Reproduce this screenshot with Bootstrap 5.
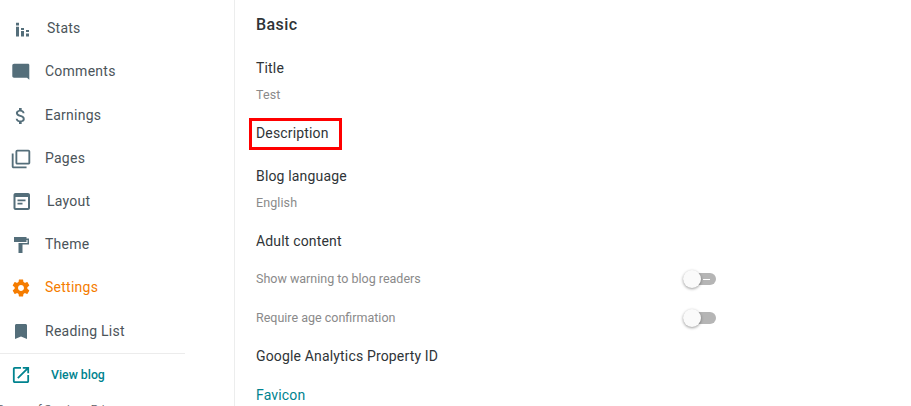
<!DOCTYPE html>
<html lang="en">
<head>
    <meta charset="UTF-8">
    <meta name="viewport" content="width=device-width, initial-scale=1.0">
    <title>Settings</title>
    <link href="https://cdn.jsdelivr.net/npm/bootstrap@5.3.0/dist/css/bootstrap.min.css" rel="stylesheet">
    <style>
        html, body { height: 406px; overflow: hidden; }
        body { font-family: Roboto, sans-serif; background: #fff; }

        /* sidebar */
        .side-panel { width: 235px; height: 406px; border-right: 1px solid #eceded; flex: none; overflow: hidden; }
        .side-menu { width: 185px; padding-top: 7px; }
        .side-item { height: 43px; font-size: 14px; letter-spacing: .25px; color: #4b545a; }
        .side-item.is-active { color: #f57c00; }
        .side-item-gap { margin-bottom: 1px; }
        .side-icon { width: 24px; height: 24px; margin-left: 9px; margin-right: 12px; fill: #546e7a; flex: none; }
        .is-active .side-icon { fill: #f57c00; }
        .side-shift { margin-left: 2px; }
        .side-rule { border-top: 1px solid #ececec; }
        .view-link { height: 42px; font-size: 12.3px; font-weight: 500; color: #00838f; }
        .view-link .side-icon { fill: #00838f; margin-right: 18px; margin-left: 9px; }
        .side-foot { font-size: 11.5px; color: #5f6368; line-height: 16px; margin-top: 5px; margin-left: -4px; }

        /* main column */
        .main-panel { padding-left: 21px; }
        .basic-head { font-size: 16px; font-weight: 500; letter-spacing: .4px; line-height: 20px; margin-top: 15px; margin-bottom: 23px; color: #2f3437; }
        .field-name { font-size: 14px; letter-spacing: .16px; line-height: 20px; color: #2f3437; }
        .field-value { font-size: 12.5px; letter-spacing: .1px; line-height: 16px; color: #8a8a8a; margin-top: 9px; }
        .gap-after-value { margin-top: 20px; }
        .gap-after-name { margin-top: 23px; }
        .gap-after-toggle { margin-top: 18px; }
        .gap-last { margin-top: 19px; }
        .toggle-row { width: 461px; height: 20px; font-size: 12.5px; color: #8a8a8a; }
        .toggle-first { margin-top: 18px; }
        .toggle-next { margin-top: 19px; }
        .favicon-link { color: #00838f; }

        /* switch */
        .switch-track { position: relative; display: block; width: 33px; height: 12px; border-radius: 6px; background: #b5b5b5; margin-right: 1px; }
        .switch-knob { position: absolute; left: 0; top: -3px; width: 18px; height: 18px; border-radius: 50%; background: #fafafa; box-shadow: 0 1px 3px rgba(0,0,0,.4); }
        .switch-dash { position: absolute; left: 20px; top: 5.500px; width: 7px; height: 1px; background: #fff; }

        /* annotation drawn on the screenshot */
        .mark-wrap { position: relative; display: inline-block; }
        .mark-box { position: absolute; left: -7px; right: -13px; top: -5px; bottom: -7px; border: 3px solid #f00; }
    </style>
</head>
<body>
    <div class="d-flex">
        <div class="side-panel">
            <div class="side-menu">
                <div class="side-item d-flex align-items-center">
                    <svg class="side-icon" viewBox="0 0 24 24"><path d="M7 5.700h3v2.800H7zM7 9.700h3v9.800H7zM12 11h3v2h-3zM12 14h3v5.500h-3zM17 13h3v2h-3zM17 16.500h3v3h-3z"/></svg>
                    <span class="side-shift">Stats</span>
                </div>
                <div class="side-item side-item-gap d-flex align-items-center">
                    <svg class="side-icon" viewBox="0 0 24 24"><path d="M3.300 5.500c0-1 .8-1.800 1.800-1.800H19c.7 0 1.300.6 1.300 1.300v14.700L18 17.700H5c-1 0-1.700-.7-1.700-1.700z"/></svg>
                    <span>Comments</span>
                </div>
                <div class="side-item d-flex align-items-center">
                    <svg class="side-icon" viewBox="0 0 24 24"><path transform="translate(1.100 1.300) scale(.89)" d="M11.800 10.900c-2.270-.59-3-1.200-3-2.150 0-1.090 1.010-1.850 2.700-1.850 1.780 0 2.440.85 2.500 2.100h2.210c-.07-1.720-1.120-3.300-3.210-3.810V3h-3v2.160c-1.940.42-3.500 1.680-3.500 3.610 0 2.310 1.910 3.460 4.700 4.130 2.500.6 3 1.480 3 2.410 0 .69-.49 1.790-2.700 1.790-2.060 0-2.870-.92-2.980-2.100h-2.200c.12 2.190 1.760 3.420 3.680 3.830V21h3v-2.150c1.950-.37 3.500-1.500 3.500-3.550 0-2.840-2.430-3.810-4.700-4.400z"/></svg>
                    <span>Earnings</span>
                </div>
                <div class="side-item d-flex align-items-center">
                    <svg class="side-icon" viewBox="0 0 24 24"><path transform="translate(.9 .9) scale(.925)" d="M4 6H2v14c0 1.100.9 2 2 2h14v-2H4V6zm16-4H8c-1.100 0-2 .9-2 2v12c0 1.100.9 2 2 2h12c1.100 0 2-.9 2-2V4c0-1.100-.9-2-2-2zm0 14H8V4h12v12z"/></svg>
                    <span>Pages</span>
                </div>
                <div class="side-item d-flex align-items-center">
                    <svg class="side-icon" viewBox="0 0 24 24"><path d="M19 3H6.500c-1.100 0-2 .9-2 2v13c0 1.100.9 2 2 2H19c1.100 0 2-.9 2-2V5c0-1.100-.9-2-2-2zm0 15H6.500V7H19v11zM8.500 9.500h8v1.800h-8zM8.500 12.800h5v1.800h-5z"/></svg>
                    <span class="side-shift">Layout</span>
                </div>
                <div class="side-item d-flex align-items-center">
                    <svg class="side-icon" viewBox="0 0 24 24"><path d="M5 4h12.500v1.500H20V11.500h-6.500V20h-4V10H18.500V7h-1v2H5z"/></svg>
                    <span>Theme</span>
                </div>
                <div class="side-item side-item-gap is-active d-flex align-items-center">
                    <svg class="side-icon" viewBox="0 0 24 24"><path transform="translate(1.800 1.800) scale(.85)" d="M19.430 12.980c.04-.32.07-.64.07-.98s-.03-.66-.07-.98l2.110-1.650c.19-.15.24-.42.12-.64l-2-3.460c-.12-.22-.39-.3-.61-.22l-2.490 1c-.52-.4-1.080-.73-1.690-.98l-.38-2.650C14.460 2.180 14.250 2 14 2h-4c-.25 0-.46.18-.49.420l-.38 2.650c-.61.25-1.170.59-1.690.98l-2.490-1c-.23-.09-.49 0-.61.220l-2 3.460c-.13.220-.07.49.12.64l2.110 1.650c-.04.32-.07.65-.07.98s.03.66.07.98l-2.110 1.650c-.19.15-.24.42-.12.64l2 3.460c.12.220.39.3.61.220l2.490-1c.52.4 1.080.73 1.690.98l.38 2.650c.03.24.24.42.49.42h4c.25 0 .46-.18.49-.42l.38-2.650c.61-.25 1.170-.59 1.690-.98l2.490 1c.23.09.49 0 .61-.22l2-3.460c.12-.22.07-.49-.12-.64l-2.110-1.650zM12 15.500c-1.930 0-3.500-1.570-3.500-3.500s1.570-3.500 3.500-3.500 3.500 1.570 3.500 3.500-1.570 3.500-3.500 3.500z"/></svg>
                    <span>Settings</span>
                </div>
                <div class="side-item d-flex align-items-center">
                    <svg class="side-icon" viewBox="0 0 24 24"><path d="M16.500 4h-9C6.700 4 6 4.700 6 5.500V19l6-2.500 6 2.500V5.500C18 4.700 17.300 4 16.500 4z"/></svg>
                    <span>Reading List</span>
                </div>
                <div class="side-rule"></div>
                <div class="view-link d-flex align-items-center">
                    <svg class="side-icon" viewBox="0 0 24 24"><path transform="translate(1.200 1.200) scale(.9)" d="M19 19H5V5h7V3H5c-1.110 0-2 .9-2 2v14c0 1.100.89 2 2 2h14c1.100 0 2-.9 2-2v-7h-2v7zM14 3v2h3.590l-9.830 9.830 1.410 1.410L19 6.410V10h2V3h-7z"/></svg>
                    <span>View blog</span>
                </div>
                <div class="side-foot text-nowrap">Terms of Service · Privacy</div>
            </div>
        </div>
        <div class="main-panel flex-grow-1">
            <div class="basic-head">Basic</div>
            <div class="field-name">Title</div>
            <div class="field-value">Test</div>
            <div class="field-name gap-after-value"><span class="mark-wrap">Description<span class="mark-box"></span></span></div>
            <div class="field-name gap-after-name">Blog language</div>
            <div class="field-value">English</div>
            <div class="field-name gap-after-value">Adult content</div>
            <div class="toggle-row toggle-first d-flex align-items-center justify-content-between">
                <span>Show warning to blog readers</span>
                <span class="switch-track"><span class="switch-dash"></span><span class="switch-knob"></span></span>
            </div>
            <div class="toggle-row toggle-next d-flex align-items-center justify-content-between">
                <span>Require age confirmation</span>
                <span class="switch-track"><span class="switch-knob"></span></span>
            </div>
            <div class="field-name gap-after-toggle">Google Analytics Property ID</div>
            <div class="field-name gap-last favicon-link">Favicon</div>
        </div>
    </div>
    <script src="https://cdn.jsdelivr.net/npm/bootstrap@5.3.0/dist/js/bootstrap.bundle.min.js"></script>
</body>
</html>
